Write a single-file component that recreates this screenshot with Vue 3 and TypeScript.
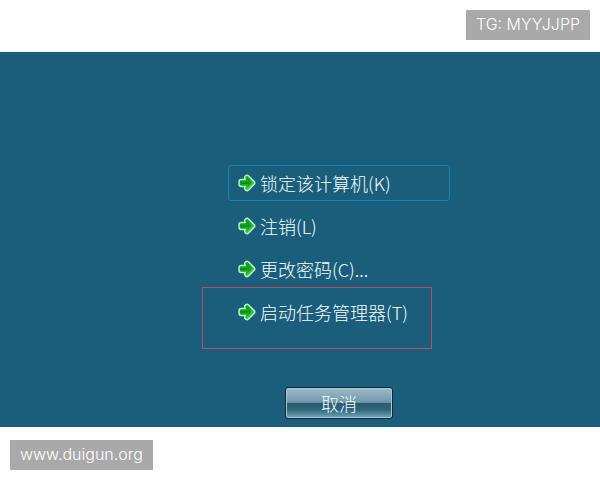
<script setup lang="ts">
import { ref } from 'vue'

interface Action {
  key: string
  label: string
  marked?: boolean
}

const actions: Action[] = [
  { key: 'K', label: '锁定该计算机(K)' },
  { key: 'L', label: '注销(L)' },
  { key: 'C', label: '更改密码(C)...' },
  { key: 'T', label: '启动任务管理器(T)', marked: true },
]

const selected = ref('K')
</script>

<template>
  <div class="page">
    <header class="top">
      <span class="tag">TG: MYYJJPP</span>
    </header>

    <main class="screen">
      <ul class="menu">
        <li v-for="action in actions" :key="action.key" class="entry" :class="{ marked: action.marked }">
          <button
            type="button"
            class="action"
            :class="{ selected: selected === action.key }"
            @click="selected = action.key"
          >
            <svg class="arrow" viewBox="0 0 18 18" aria-hidden="true">
              <defs>
                <linearGradient :id="'green' + action.key" x1="0" y1="0" x2="1" y2="1">
                  <stop offset="0" stop-color="#0d9426" />
                  <stop offset="0.5" stop-color="#18a822" />
                  <stop offset="1" stop-color="#6cf046" />
                </linearGradient>
              </defs>
              <path
                d="M7.6 1.8Q9.2 .6 10.6 2L16.2 7.6Q17.4 8.9 16.2 10.2L10.6 16Q9.2 17.3 7.6 16.1Q6.2 14.8 6.9 13.2L7.3 12.4H3.2Q1.1 12.4 1.1 10.5V7.5Q1.1 5.6 3.2 5.6H7.3L6.8 4.7Q6.2 3 7.6 1.8Z"
                :fill="`url(#green${action.key})`"
                stroke="#b4f2cc"
                stroke-width="1.5"
                stroke-linejoin="round"
              />
              <path d="M2.8 8H11L8.6 4L13.4 8.9L8.6 13.4L10.4 10H2.8Z" fill="#077a1c" opacity=".5" />
            </svg>
            <span class="label">{{ action.label }}</span>
          </button>
        </li>
      </ul>
      <button type="button" class="cancel"><span class="label">取消</span></button>
    </main>

    <footer class="bottom">
      <span class="tag">www.duigun.org</span>
    </footer>
  </div>
</template>

<style>
body {
  margin: 0;
  background: #fff;
}
</style>

<style scoped>
.page {
  min-height: 100vh;
  display: flex;
  flex-direction: column;
  font-family: 'Noto Sans CJK SC', sans-serif;
}

.top {
  display: flex;
  justify-content: flex-end;
  padding: 10px 10px 12px;
}

.bottom {
  display: flex;
  padding: 13px 10px 10px;
}

.tag {
  padding: 0 10px 2px;
  background: #a9a9a9;
  color: #fff;
  font-family: Inter, sans-serif;
  font-size: 16px;
  font-weight: 300;
  line-height: 28px;
}

.screen {
  flex: 1;
  display: flex;
  flex-direction: column;
  align-items: center;
  justify-content: flex-end;
  gap: 57px;
  padding: 0 0 8px 13%;
  background: #1a5e7b;
}

.menu {
  display: flex;
  flex-direction: column;
  gap: 7px;
  min-width: 222px;
  margin: 0;
  padding: 0;
  list-style: none;
}

.entry {
  position: relative;
  display: flex;
}

.marked::after {
  content: '';
  position: absolute;
  inset: -7px 18px -19px -26px;
  border: 1px solid #b8505c;
  pointer-events: none;
}

.action {
  flex: 1;
  display: flex;
  align-items: center;
  gap: 4px;
  height: 36px;
  padding: 0 9px;
  border: 1px solid transparent;
  border-radius: 3px;
  background: transparent;
  color: #f4feff;
  font-family: inherit;
  font-size: 18px;
  font-weight: 300;
  line-height: 24px;
  text-align: left;
  white-space: nowrap;
}

.label {
  display: block;
  padding-bottom: 1px;
}

.selected {
  border-color: #1585b0;
}

.arrow {
  flex: none;
  width: 18px;
  height: 18px;
}

.cancel {
  min-width: 108px;
  height: 32px;
  padding: 0;
  border: 1px solid #10293a;
  border-radius: 3px;
  background: linear-gradient(#9fbcc9 0%, #6f98a9 48%, #2b5b70 50%, #306579 72%, #74a9ba 100%);
  box-shadow: inset 0 0 0 1px #a9c9d5;
  color: #f4feff;
  font-family: inherit;
  font-size: 18px;
  font-weight: 300;
  line-height: 24px;
}
</style>
